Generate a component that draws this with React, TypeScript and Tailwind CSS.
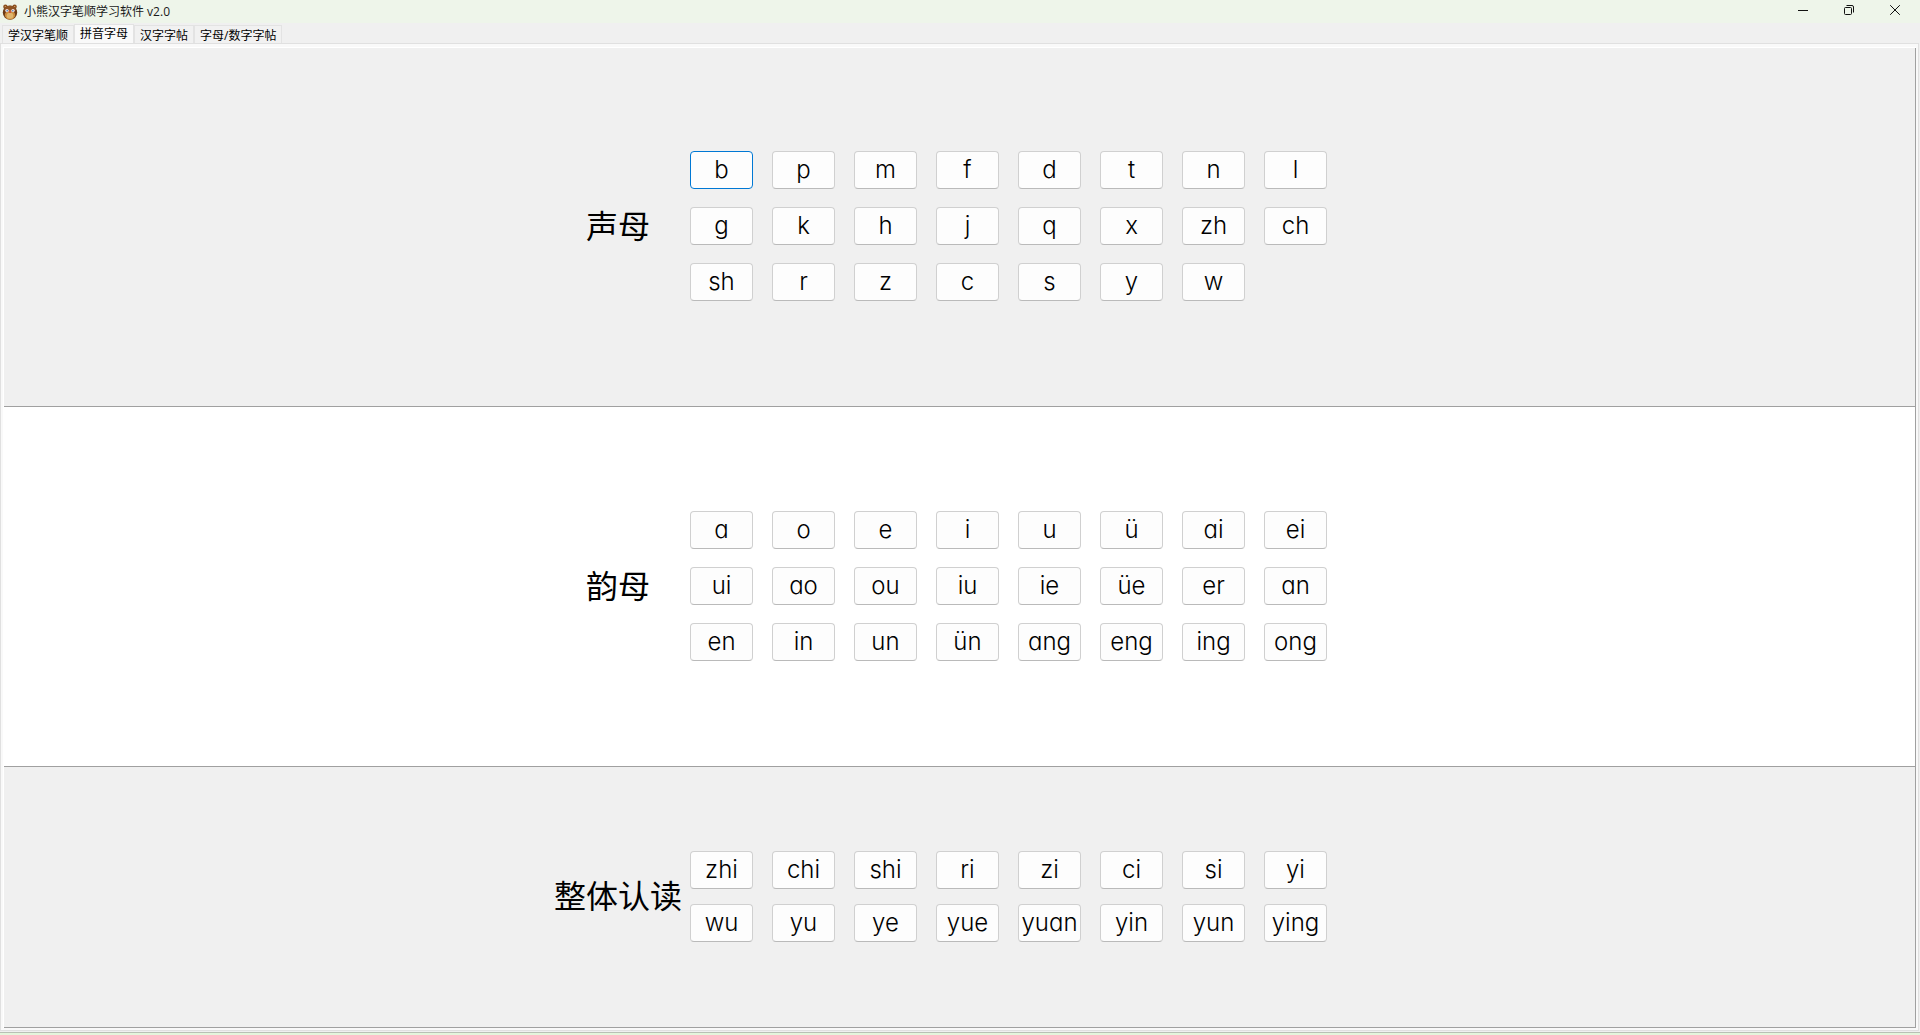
import React from "react";

const tabs = ["学汉字笔顺", "拼音字母", "汉字字帖", "字母/数字字帖"];

const shengmu = [
  "b", "p", "m", "f", "d", "t", "n", "l",
  "g", "k", "h", "j", "q", "x", "zh", "ch",
  "sh", "r", "z", "c", "s", "y", "w",
];

const yunmu = [
  "a", "o", "e", "i", "u", "ü", "ai", "ei",
  "ui", "ao", "ou", "iu", "ie", "üe", "er", "an",
  "en", "in", "un", "ün", "ang", "eng", "ing", "ong",
];

const zhengti = [
  "zhi", "chi", "shi", "ri", "zi", "ci", "si", "yi",
  "wu", "yu", "ye", "yue", "yuan", "yin", "yun", "ying",
];

const BearIcon = () => (
  <svg viewBox="0 0 16 16" className="h-4 w-4" aria-hidden="true">
    <circle cx="3.4" cy="2.8" r="2.2" fill="#8a4f1e" />
    <circle cx="12.6" cy="2.8" r="2.2" fill="#8a4f1e" />
    <circle cx="3.6" cy="3" r="1" fill="#d9a066" />
    <circle cx="12.4" cy="3" r="1" fill="#d9a066" />
    <ellipse cx="8" cy="8.6" rx="7.2" ry="7.2" fill="#6b3a16" />
    <ellipse cx="8" cy="5.4" rx="5.6" ry="3.6" fill="#8f5423" />
    <ellipse cx="8" cy="11" rx="5.2" ry="4.5" fill="#c98a3c" />
    <ellipse cx="8" cy="11.8" rx="3.4" ry="3" fill="#dfb56c" />
    <circle cx="5" cy="6.6" r="1.7" fill="#f3dfe6" />
    <circle cx="11" cy="6.6" r="1.7" fill="#f3dfe6" />
    <circle cx="5.2" cy="6.8" r="0.8" fill="#3a7fb8" />
    <circle cx="10.8" cy="6.8" r="0.8" fill="#3a7fb8" />
    <circle cx="8" cy="8" r="1" fill="#d23c3c" />
  </svg>
);

const TitleBar = () => (
  <header className="flex h-[23px] items-center bg-[#eef5ea] px-0.5">
    <BearIcon />
    <h1 className="ml-1.5 flex-1 text-xs leading-4 text-[#1a1a1a]">小熊汉字笔顺学习软件 v2.0</h1>
    <div className="flex self-start">
      <button aria-label="最小化" className="flex h-5 w-[46px] items-center justify-center">
        <svg viewBox="0 0 10 10" className="h-2.5 w-2.5" fill="none" stroke="#111">
          <path d="M0 5.5h10" />
        </svg>
      </button>
      <button aria-label="还原" className="flex h-5 w-[46px] items-center justify-center">
        <svg viewBox="0 0 10 10" className="h-2.5 w-2.5" fill="none" stroke="#111">
          <rect x="0.5" y="2.5" width="7" height="7" rx="1" />
          <path d="M2.5 0.5H8a1.5 1.5 0 0 1 1.5 1.5v5.5" />
        </svg>
      </button>
      <button aria-label="关闭" className="flex h-5 w-[46px] items-center justify-center">
        <svg viewBox="0 0 10 10" className="h-2.5 w-2.5" fill="none" stroke="#111">
          <path d="M0.2 0.2l9.6 9.6M9.8 0.2L0.2 9.8" />
        </svg>
      </button>
    </div>
  </header>
);

const TabBar = () => (
  <nav className="flex h-5 items-end pl-0.5" role="tablist">
    {tabs.map((tab) =>
      tab === "拼音字母" ? (
        <button
          key={tab}
          role="tab"
          aria-selected="true"
          className="-mb-px h-5 border border-b-0 border-[#e3e3e3] bg-[#f9f9f9] px-[5px] pb-0.5 text-xs leading-4 text-black"
        >
          {tab}
        </button>
      ) : (
        <button
          key={tab}
          role="tab"
          aria-selected="false"
          className="h-[18px] border border-b-0 border-[#e3e3e3] bg-[#f1f1f1] px-[5px] pt-0.5 text-xs leading-4 text-black"
        >
          {tab}
        </button>
      )
    )}
  </nav>
);

type SectionProps = {
  title: string;
  items: string[];
  className: string;
  gridClass: string;
};

const Section = ({ title, items, className, gridClass }: SectionProps) => (
  <section className={`flex items-center justify-center border-b border-r border-[#a0a0a0] pb-0.5 pr-[38px] ${className}`}>
    <h2 className="w-32 text-center text-[32px] leading-10 text-black">{title}</h2>
    <div className={`ml-2 grid grid-cols-8 gap-x-[19px] ${gridClass}`}>
      {items.map((item) => (
        <button
          key={item}
          className={`h-[38px] w-[63px] rounded border bg-[#fdfdfd] font-['Inter','Noto_Sans_CJK_SC',sans-serif] text-2xl font-light leading-8 text-black [font-feature-settings:'cv11'] ${
            item === "b" ? "border-[#0078d4]" : "border-[#d0d0d0] border-b-[#bababa]"
          }`}
        >
          {item}
        </button>
      ))}
    </div>
  </section>
);

export default function App() {
  return (
    <div className="flex min-h-screen flex-col bg-[#f0f0f0] font-['Open_Sans','Noto_Sans_CJK_SC',sans-serif]">
      <TitleBar />
      <TabBar />
      <main className="mr-px flex flex-1 flex-col border border-[#e0e0e0] bg-[#f9f9f9] p-0.5 pt-[3px]">
        <div className="grid flex-1 grid-rows-[359fr_360fr_261fr] border-l border-t border-white">
          <Section title="声母" items={shengmu} className="bg-[#f0f0f0]" gridClass="gap-y-[18px]" />
          <Section title="韵母" items={yunmu} className="bg-white" gridClass="gap-y-[18px]" />
          <Section title="整体认读" items={zhengti} className="bg-[#f0f0f0]" gridClass="gap-y-[15px]" />
        </div>
      </main>
      <footer className="mt-px h-[3px] border-t border-[#b8c0b4] bg-[#e4f5dc]" />
    </div>
  );
}
